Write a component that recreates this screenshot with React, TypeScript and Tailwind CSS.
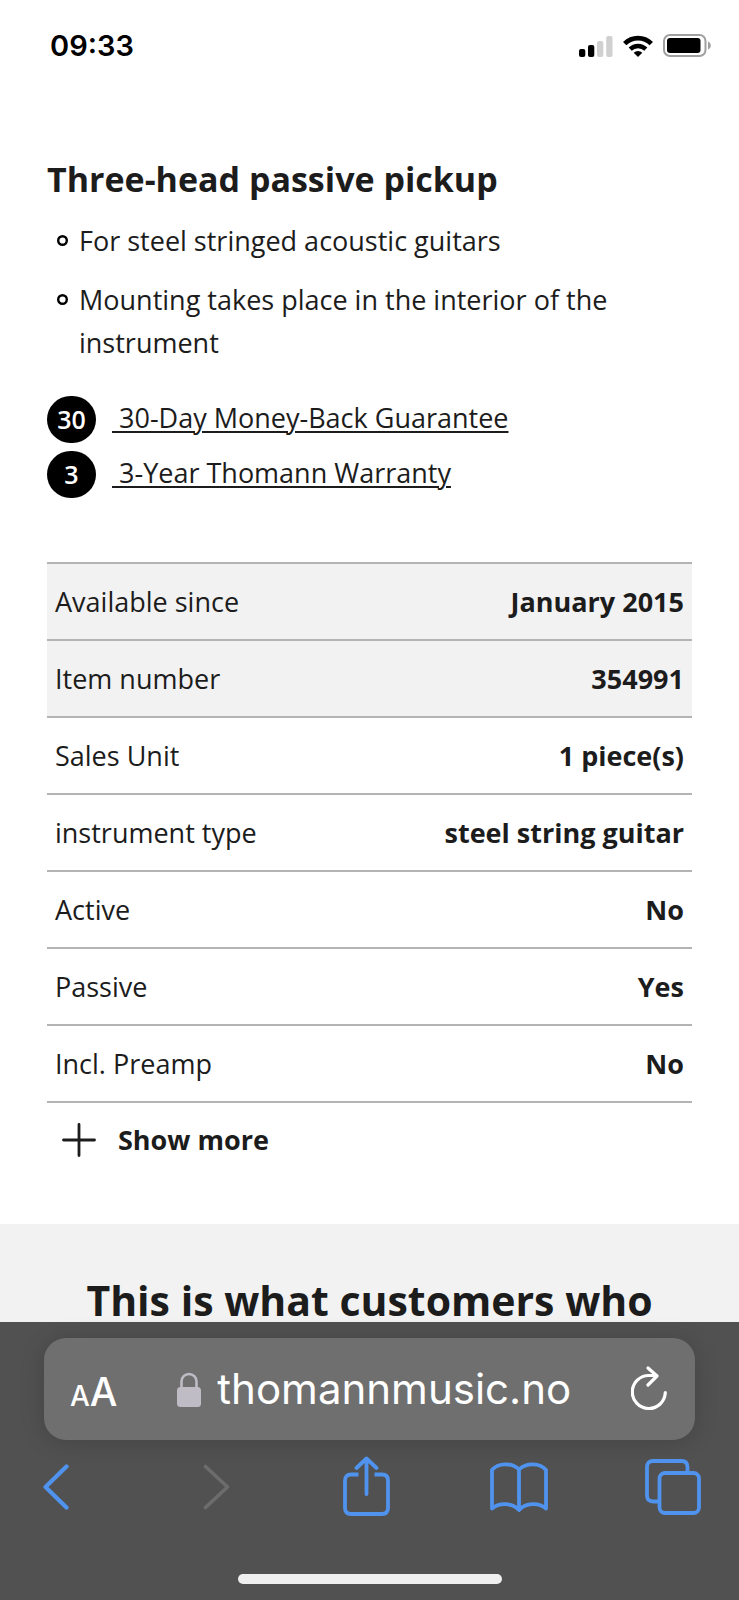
import React from 'react';

interface Spec {
  label: string;
  value: string;
  highlighted?: boolean;
}

const specs: Spec[] = [
  { label: 'Available since', value: 'January 2015', highlighted: true },
  { label: 'Item number', value: '354991', highlighted: true },
  { label: 'Sales Unit', value: '1 piece(s)' },
  { label: 'instrument type', value: 'steel string guitar' },
  { label: 'Active', value: 'No' },
  { label: 'Passive', value: 'Yes' },
  { label: 'Incl. Preamp', value: 'No' }
];

const features = [
  'For steel stringed acoustic guitars',
  'Mounting takes place in the interior of the instrument'
];

const guarantees = [
  { badge: '30', text: '30-Day Money-Back Guarantee' },
  { badge: '3', text: '3-Year Thomann Warranty' }
];

const StatusBar: React.FC = () => (
  <header className="flex items-center justify-between h-[91px] pl-[50px] pr-7 shrink-0 text-black">
    <time className="font-['Inter',sans-serif] text-[29px] leading-9 font-semibold">09:33</time>
    <div className="flex items-center gap-[10px]">
      <svg width="34" height="22" viewBox="0 0 34 22">
        <rect x="0" y="14" width="6.300" height="8" rx="2" fill="#000" />
        <rect x="9" y="10" width="6.300" height="12" rx="2" fill="#000" />
        <rect x="18" y="6" width="6.300" height="16" rx="2" fill="#d0d0d0" />
        <rect x="27.200" y="1" width="6.300" height="21" rx="2" fill="#d0d0d0" />
      </svg>
      <svg width="30" height="22" viewBox="0 0 30 22" fill="none" stroke="#000" strokeWidth="4.800">
        <path d="M1.700 8.600a19 19 0 0 1 26.600 0" />
        <path d="M7.200 14.200a11.200 11.200 0 0 1 15.600 0" strokeWidth="4.400" />
        <path d="M15 22l-4.300-4.300a6.200 6.200 0 0 1 8.600 0z" fill="#000" stroke="none" />
      </svg>
      <svg width="48" height="23" viewBox="0 0 48 23">
        <rect x="1" y="1" width="41.500" height="21" rx="6" fill="none" stroke="#a0a0a0" strokeWidth="2" />
        <rect x="4" y="4" width="33.500" height="15" rx="3" fill="#000" />
        <path d="M45 7.500c1.800.7 2.800 2.200 2.800 4s-1 3.300-2.800 4z" fill="#a0a0a0" />
      </svg>
    </div>
  </header>
);

const SpecTable: React.FC = () => (
  <table className="w-full mt-16 border-collapse">
    <tbody>
      {specs.map((spec) => (
        <tr
          key={spec.label}
          className={`h-[77px] border-y-2 border-[#b4b4b4] ${spec.highlighted ? 'bg-[#f2f2f2]' : ''}`}
        >
          <th scope="row" className="px-2 text-left font-normal">{spec.label}</th>
          <td className="px-2 text-right font-bold">{spec.value}</td>
        </tr>
      ))}
    </tbody>
  </table>
);

const BrowserBar: React.FC = () => (
  <footer className="shrink-0 pt-4 pb-4 bg-[#515151]">
    <div className="flex items-center justify-between h-[102px] mx-11 pl-[26px] pr-7 rounded-[22px] bg-[#6f6f6f] shadow-[0_2px_24px_rgba(0,0,0,0.16)] font-['Inter',sans-serif] text-white">
      <button aria-label="Page settings" className="flex items-baseline pt-1 leading-none font-medium">
        <span className="text-[28px]">A</span>
        <span className="text-[39px]">A</span>
      </button>
      <a href="https://thomannmusic.no" className="flex items-center gap-4 text-[42px] leading-[52px]">
        <svg width="24" height="35" viewBox="0 0 24 35">
          <path d="M4.500 17V9.500a7.500 7.500 0 0 1 15 0V17" fill="none" stroke="#bfbcc5" strokeWidth="2.600" />
          <rect x="0" y="15" width="24" height="20" rx="3.500" fill="#bfbcc5" />
        </svg>
        <span>thomannmusic.no</span>
      </a>
      <button aria-label="Reload">
        <svg width="36" height="46" viewBox="0 0 36 46" fill="none" stroke="#fff" strokeWidth="3.200" strokeLinecap="round" strokeLinejoin="round">
          <path d="M34.300 26.500A16.500 16.500 0 1 1 18 9.500h7.500" />
          <path d="M17 2l9 8-9 9" />
        </svg>
      </button>
    </div>

    <nav className="flex items-center justify-between h-[94px] pl-[43px] pr-[38px] text-[#4f93ee]">
      <button aria-label="Back" className="pr-9">
        <svg width="27" height="46" viewBox="0 0 27 46" fill="none" stroke="currentColor" strokeWidth="4.200" strokeLinecap="round" strokeLinejoin="round">
          <path d="M23.500 2.500L2.500 23l21 20.500" />
        </svg>
      </button>
      <button aria-label="Forward" className="pr-4 text-[#6c6c6c]" disabled>
        <svg width="27" height="46" viewBox="0 0 27 46" fill="none" stroke="currentColor" strokeWidth="3.600" strokeLinecap="round" strokeLinejoin="round">
          <path d="M2.500 2.500l22 20.500-22 20.500" />
        </svg>
      </button>
      <button aria-label="Share" className="pr-1 pb-[2px]">
        <svg width="47" height="60" viewBox="0 0 47 60" fill="none" stroke="currentColor" strokeWidth="3.800" strokeLinejoin="round">
          <path d="M15.500 18.500H8q-6 0-6 6V52q0 6 6 6h31q6 0 6-6V24.500q0-6-6-6h-7.500" />
          <path d="M23.500 38V2.500M13.500 12l10-9.500 10 9.500" strokeLinecap="round" />
        </svg>
      </button>
      <button aria-label="Bookmarks">
        <svg width="58" height="50" viewBox="0 0 58 50" fill="none" stroke="currentColor" strokeWidth="3.800" strokeLinejoin="round">
          <path d="M29 7.500C22 .5 8 .5 2 8v38.500c7-6 20-6 27 1.500 7-7.500 20-7.500 27-1.500V8C50 .5 36 .5 29 7.500zM29 7.500V48" />
        </svg>
      </button>
      <button aria-label="Tabs">
        <svg width="56" height="56" viewBox="0 0 56 56" fill="none" stroke="currentColor" strokeWidth="3.800">
          <path d="M14 42.500H8q-6 0-6-6V8q0-6 6-6h28.500q6 0 6 6v6" />
          <rect x="14.500" y="14" width="39.500" height="40" rx="5.500" />
        </svg>
      </button>
    </nav>

    <div className="w-[264px] h-[10px] mx-auto mt-10 rounded-full bg-[#efefef]"></div>
  </footer>
);

const App: React.FC = () => {
  return (
    <div className="flex flex-col h-screen overflow-hidden bg-white font-['Open_Sans',sans-serif] text-[27px] leading-[43px] text-[#1c1c1c]">
      <StatusBar />

      <main className="flex-1 min-h-0 overflow-hidden">
        <section className="px-[47px] pt-16 pb-12">
          <h2 className="text-[34px] leading-[48px] font-bold">Three-head passive pickup</h2>

          <ul className="mt-4 space-y-4">
            {features.map((feature) => (
              <li key={feature} className="flex items-start gap-[11px] pl-[10px]">
                <svg width="11" height="11" viewBox="0 0 11 11" className="mt-4 shrink-0">
                  <circle cx="5.500" cy="5.500" r="4.300" fill="none" stroke="#000" strokeWidth="2.400" />
                </svg>
                <span>{feature}</span>
              </li>
            ))}
          </ul>

          {/* Guarantees */}
          <ul className="mt-8 space-y-2">
            {guarantees.map((item) => (
              <li key={item.badge} className="flex items-center gap-4">
                <span className="flex items-center justify-center w-[49px] h-[47px] shrink-0 rounded-full bg-black text-white text-[25px] font-semibold">
                  {item.badge}
                </span>
                <a href="#guarantee" className="pb-1 leading-[40px] underline decoration-2 underline-offset-3">
                  &nbsp;{item.text}
                </a>
              </li>
            ))}
          </ul>

          <SpecTable />

          <button className="flex items-center gap-[22px] h-[73px] pl-[15px] font-bold">
            <svg width="34" height="34" viewBox="0 0 34 34" stroke="currentColor" strokeWidth="2.800" strokeLinecap="round">
              <path d="M17 1.500v31M1.500 17h31" />
            </svg>
            Show more
          </button>
        </section>

        <section className="px-12 pt-[54px] bg-[#f2f2f2]">
          <h2 className="text-center text-[41px] leading-[44px] font-bold">This is what customers who</h2>
        </section>
      </main>

      <BrowserBar />
    </div>
  );
};

export default App;
